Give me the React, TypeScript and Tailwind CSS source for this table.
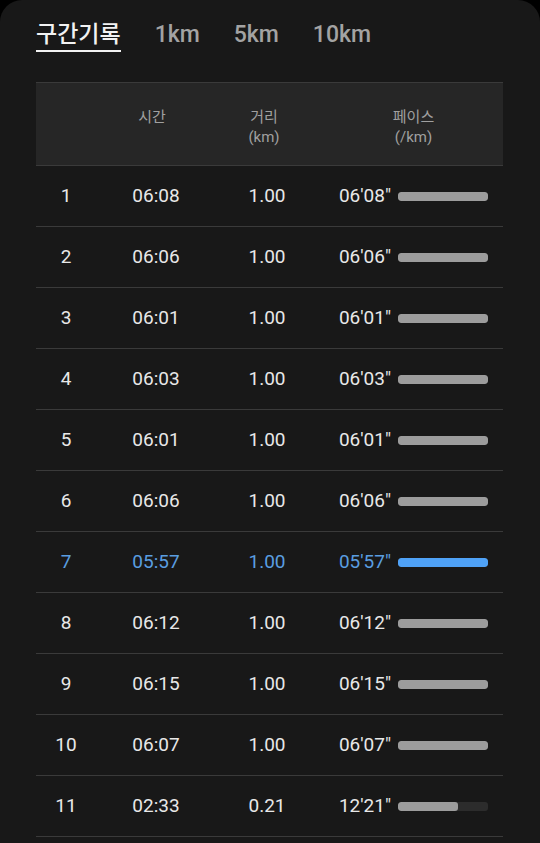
import { clsx } from 'clsx';

interface Split {
  no: number;
  time: string;
  dist: string;
  pace: string;
  ratio: number;
  best?: boolean;
}

const splits: Split[] = [
  { no: 1, time: '06:08', dist: '1.00', pace: `06'08"`, ratio: 1 },
  { no: 2, time: '06:06', dist: '1.00', pace: `06'06"`, ratio: 1 },
  { no: 3, time: '06:01', dist: '1.00', pace: `06'01"`, ratio: 1 },
  { no: 4, time: '06:03', dist: '1.00', pace: `06'03"`, ratio: 1 },
  { no: 5, time: '06:01', dist: '1.00', pace: `06'01"`, ratio: 1 },
  { no: 6, time: '06:06', dist: '1.00', pace: `06'06"`, ratio: 1 },
  { no: 7, time: '05:57', dist: '1.00', pace: `05'57"`, ratio: 1, best: true },
  { no: 8, time: '06:12', dist: '1.00', pace: `06'12"`, ratio: 1 },
  { no: 9, time: '06:15', dist: '1.00', pace: `06'15"`, ratio: 1 },
  { no: 10, time: '06:07', dist: '1.00', pace: `06'07"`, ratio: 1 },
  { no: 11, time: '02:33', dist: '0.21', pace: `12'21"`, ratio: 0.67 },
];

const tabs = ['구간기록', '1km', '5km', '10km'];

export default function App() {
  return (
    <div
      className="min-h-screen bg-black"
      style={{ fontFamily: 'Roboto, "Noto Sans CJK KR", sans-serif' }}
    >
      <div className="h-[843px] overflow-hidden rounded-t-[22px] bg-[#181818] px-9">
        {/* tabs */}
        <div className="flex items-start gap-[34px] pt-[20px]">
          {tabs.map((t, i) => (
            <div key={t} className="flex flex-col">
              <span
                className={clsx(
                  'text-[23px] leading-[29px] font-medium',
                  i === 0 ? 'text-[#f2f2f2]' : 'text-[#a3a3a3]'
                )}
              >
                {t}
              </span>
              {i === 0 && <div className="mt-[1px] h-[2px] bg-[#f2f2f2]" />}
            </div>
          ))}
        </div>

        {/* table */}
        <div className="mt-[30px] w-[467px]">
          <div className="grid h-[84px] grid-cols-[60px_112px_112px_183px] border-y border-[#3a3a3a] bg-[#262626] pt-[24px] text-center text-[15px] leading-[20px] text-[#a0a0a0]">
            <div />
            <div>시간</div>
            <div>
              거리
              <br />
              (km)
            </div>
            <div className="pl-[4px]">
              페이스
              <br />
              (/km)
            </div>
          </div>

          {splits.map((s) => (
            <div
              key={s.no}
              className={clsx(
                'grid h-[61px] grid-cols-[60px_120px_102px_185px] items-center border-b border-[#3a3a3a] text-[19px]',
                s.best ? 'text-[#5a9ee0]' : 'text-[#e8e8e8]'
              )}
            >
              <div className="text-center">{s.no}</div>
              <div className="text-center">{s.time}</div>
              <div className="text-center">{s.dist}</div>
              <div className="flex items-center">
                <span className="w-[73px] text-right">{s.pace}</span>
                <div className="ml-[7px] h-[9px] w-[90px] overflow-hidden rounded-[3px] bg-[#2c2c2c]">
                  <div
                    className={clsx('h-full rounded-[3px]', s.best ? 'bg-[#4fa2f7]' : 'bg-[#9c9c9c]')}
                    style={{ width: `${s.ratio * 100}%` }}
                  />
                </div>
              </div>
            </div>
          ))}
        </div>
      </div>
    </div>
  );
}
